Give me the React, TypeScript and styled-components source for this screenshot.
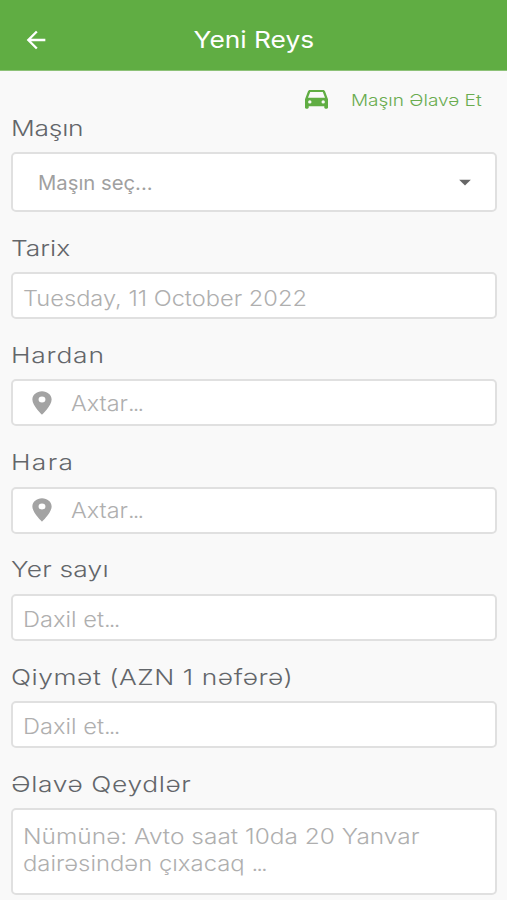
import React from "react";
import styled, { createGlobalStyle } from "styled-components";
import { MdArrowBack, MdArrowDropDown, MdLocationOn } from "react-icons/md";

const GlobalStyle = createGlobalStyle`
  * {
    box-sizing: border-box;
  }
  body {
    margin: 0;
    background: #f9f9f9;
    font-family: "Inter", "Noto Sans", sans-serif;
    font-weight: 300;
  }
`;

const Screen = styled.div`
  height: 900px;
  overflow: hidden;
  background: #f9f9f9;
`;

// extended letterforms, wider than the regular face
const Wide = styled.span<{ $scale: number; $spacing?: number; $origin?: string }>`
  display: inline-block;
  transform: scaleX(${(p) => p.$scale});
  transform-origin: ${(p) => p.$origin || "left"} center;
  letter-spacing: ${(p) => p.$spacing || 0}px;
  white-space: nowrap;
`;

const Dots = styled.span`
  letter-spacing: -1.7px;
`;

const Header = styled.header`
  display: grid;
  grid-template-columns: 71px 1fr 71px;
  align-items: center;
  height: 71px;
  padding-top: 9px;
  background: #60ad43;
  border-bottom: 1px solid #8dc278;
  color: #fff;
  svg {
    justify-self: center;
  }
  h1 {
    margin: 0;
    text-align: center;
    font-size: 23.5px;
    font-weight: 400;
    line-height: 30px;
  }
`;

const Form = styled.main`
  padding: 0 10px 0 11px;
`;

const AddCar = styled.div`
  display: flex;
  justify-content: flex-end;
  align-items: center;
  gap: 41px;
  height: 42px;
  padding: 16px 15px 0 0;
  color: #69ac50;
  font-size: 16.4px;
  svg {
    margin-bottom: 2px;
    color: #60ad43;
  }
`;

const Label = styled.label<{ $first?: boolean }>`
  display: block;
  padding: ${(p) => (p.$first ? 0 : 20.8)}px 0 ${(p) => (p.$first ? 9 : 9.4)}px;
  color: #63666a;
  font-size: 22px;
  line-height: 30px;
`;

const Box = styled.div<{ $shift?: number }>`
  display: flex;
  align-items: center;
  height: 47px;
  padding: ${(p) => p.$shift || 0}px 10px 0 10px;
  background: #fff;
  border: 2px solid #e0e0e0;
  border-radius: 5px;
  color: #afafaf;
  font-size: 21.5px;
  svg {
    flex: none;
    margin: 0 15px 0 5px;
    color: #a3a3a3;
    transform: scaleX(1.18);
  }
`;

const SelectBox = styled(Box)`
  justify-content: space-between;
  height: 60px;
  padding: 1px 16px 0 25px;
  color: #a0a0a0;
  font-size: 19.5px;
  font-weight: 400;
  svg {
    margin: 0 0 2px;
    color: #666;
    transform: none;
  }
`;

const NoteBox = styled(Box)`
  flex-direction: column;
  align-items: flex-start;
  height: 87px;
  padding-top: 13px;
  line-height: 27px;
`;

const fields = [
  { label: "Tarix", spacing: 0, text: "Tuesday, 11 October 2022", scale: 1.1, shift: 4 },
  { label: "Hardan", spacing: 0.65, text: "Axtar", scale: 1.09, dots: true, pin: true },
  { label: "Hara", spacing: 1.1, text: "Axtar", scale: 1.09, dots: true, pin: true },
  { label: "Yer sayı", spacing: 0.15, text: "Daxil et", scale: 1.1, dots: true, shift: 4 },
  { label: "Qiymət (AZN 1 nəfərə)", spacing: 0.45, text: "Daxil et", scale: 1.1, dots: true, shift: 4 },
];

const CarIcon = () => (
  <svg width="23" height="19" viewBox="0 0 23 19" fill="currentColor">
    <path
      fillRule="evenodd"
      d="M5 0H18C19.1 0 19.8.6 20.1 1.5L23 9.2V17.5C23 18.2 22.5 18.7 21.800 18.700H20.500C19.800 18.700 19.300 18.200 19.300 17.500V16.300H3.700V17.500C3.700 18.200 3.200 18.700 2.500 18.700H1.200C.5 18.700 0 18.200 0 17.500V9.200L2.900 1.500C3.200 .6 3.900 0 5 0ZM5.200 1.900L3 7.700H20L17.800 1.900Z
        M3.100 11.900A1.700 1.700 0 1 0 6.500 11.900A1.700 1.700 0 1 0 3.100 11.900Z
        M16.500 11.900A1.700 1.700 0 1 0 19.900 11.900A1.700 1.700 0 1 0 16.500 11.900Z"
    />
  </svg>
);

const App = () => {
  return (
    <>
      <GlobalStyle />
      <Screen>
        <Header>
          <MdArrowBack size={28} />
          <h1>
            <Wide $scale={1.12} $origin="center">
              Yeni Reys
            </Wide>
          </h1>
        </Header>
        <Form>
          <AddCar>
            <CarIcon />
            <Wide $scale={1.16} $origin="right">
              Maşın Əlavə Et
            </Wide>
          </AddCar>
          <Label $first>
            <Wide $scale={1.2} $spacing={-0.2}>
              Maşın
            </Wide>
          </Label>
          <SelectBox>
            <Wide $scale={1.04}>Maşın seç...</Wide>
            <MdArrowDropDown size={28} />
          </SelectBox>
          {fields.map((field) => (
            <div key={field.label}>
              <Label>
                <Wide $scale={1.2} $spacing={field.spacing}>
                  {field.label}
                </Wide>
              </Label>
              <Box $shift={field.shift}>
                {field.pin && <MdLocationOn size={28} />}
                <Wide $scale={field.scale}>
                  {field.text}
                  {field.dots && <Dots>...</Dots>}
                </Wide>
              </Box>
            </div>
          ))}
          <Label>
            <Wide $scale={1.2} $spacing={0.5}>
              Əlavə Qeydlər
            </Wide>
          </Label>
          <NoteBox>
            <Wide $scale={1.138}>Nümünə: Avto saat 10da 20 Yanvar</Wide>
            <Wide $scale={1.11}>
              dairəsindən çıxacaq <Dots>...</Dots>
            </Wide>
          </NoteBox>
        </Form>
      </Screen>
    </>
  );
};

export default App;
